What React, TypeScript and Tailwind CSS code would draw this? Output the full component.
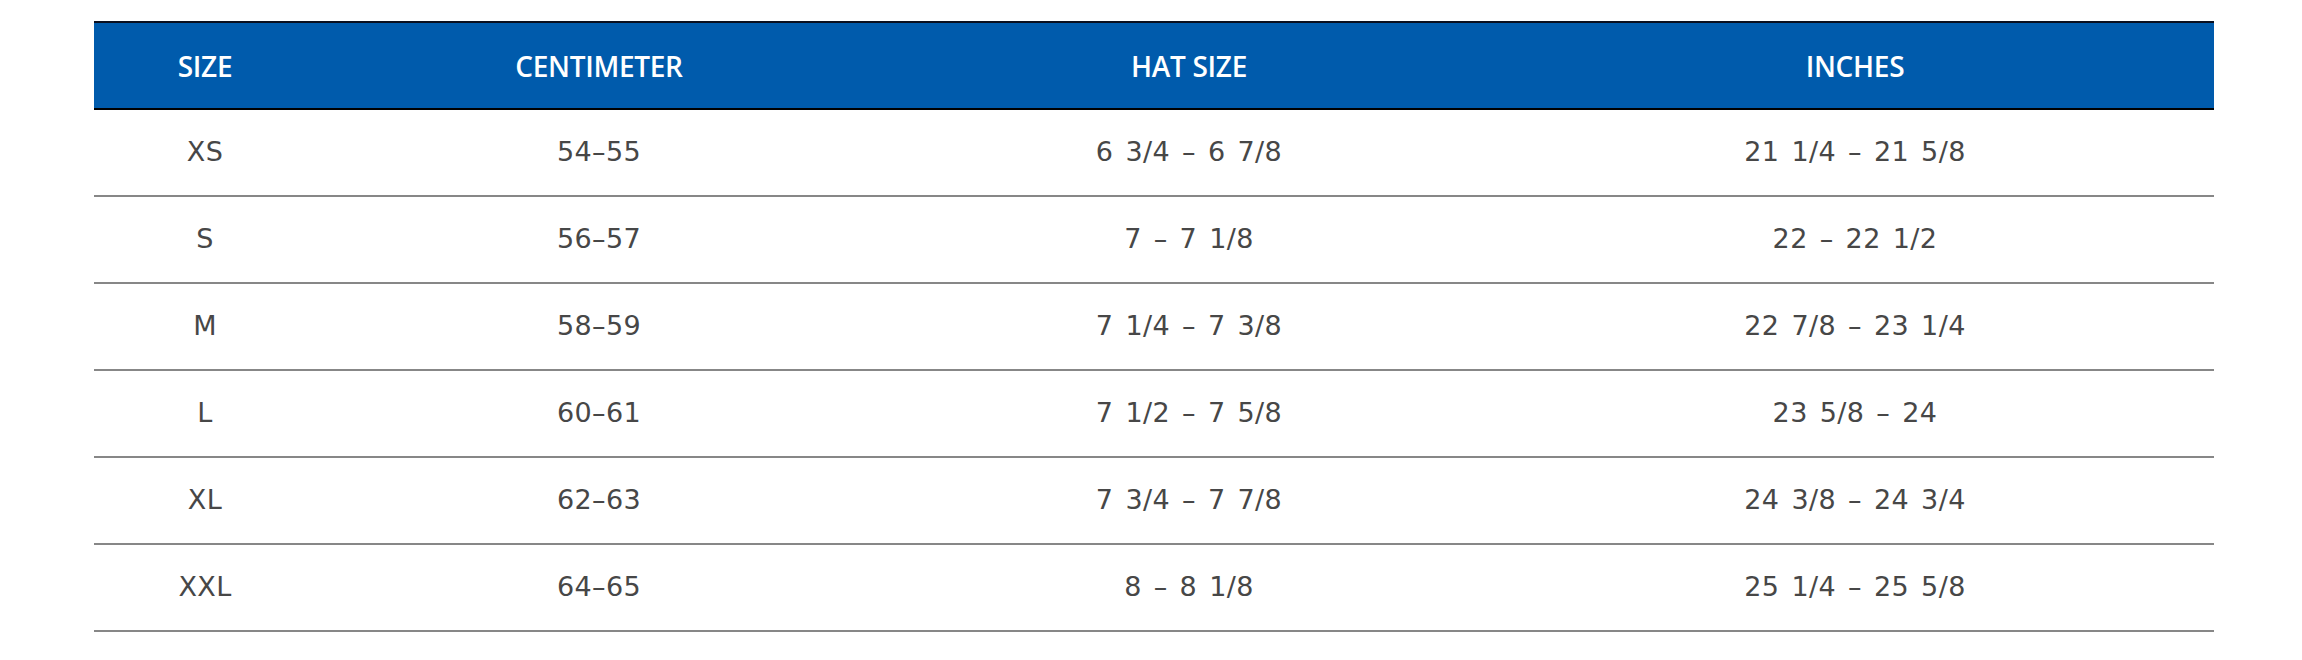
import React from "react";

const rows: [string, string, string, string][] = [
  ["XS", "54–55", "6 3/4 – 6 7/8", "21 1/4 – 21 5/8"],
  ["S", "56–57", "7 – 7 1/8", "22 – 22 1/2"],
  ["M", "58–59", "7 1/4 – 7 3/8", "22 7/8 – 23 1/4"],
  ["L", "60–61", "7 1/2 – 7 5/8", "23 5/8 – 24"],
  ["XL", "62–63", "7 3/4 – 7 7/8", "24 3/8 – 24 3/4"],
  ["XXL", "64–65", "8 – 8 1/8", "25 1/4 – 25 5/8"],
];

const headers = ["SIZE", "CENTIMETER", "HAT SIZE", "INCHES"];

export default function App() {
  return (
    <div className="w-[2302px] h-[660px] bg-white pl-[94px] pt-[21px]">
      <div className="w-[2120px]">
        <div
          className="grid grid-cols-[222px_566px_614px_718px] h-[89px] bg-[#005bac] border-t-2 border-t-[#0a1020] border-b-2 border-b-black text-white text-[28px] font-semibold tracking-[-0.3px]"
          style={{ fontFamily: '"Open Sans", "Liberation Sans", sans-serif' }}
        >
          {headers.map((h) => (
            <div key={h} className="flex items-center justify-center">
              {h}
            </div>
          ))}
        </div>
        {rows.map((r) => (
          <div
            key={r[0]}
            className="grid grid-cols-[222px_566px_614px_718px] h-[87px] border-b-2 border-b-[#878787] text-[#474747] text-[27px] tracking-[0.4px] [word-spacing:3px]"
            style={{ fontFamily: '"DejaVu Sans", "Liberation Sans", sans-serif' }}
          >
            {r.map((c, i) => (
              <div key={i} className="flex items-center justify-center">
                {c}
              </div>
            ))}
          </div>
        ))}
      </div>
    </div>
  );
}
